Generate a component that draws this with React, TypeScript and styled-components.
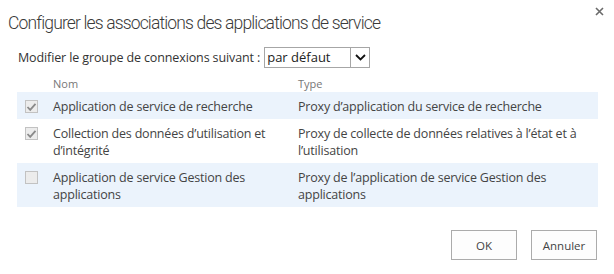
import React from "react"
import styled, { createGlobalStyle } from "styled-components"

const GlobalStyle = createGlobalStyle`
  html, body {
    margin: 0;
    padding: 0;
    background: #ffffff;
  }
  body {
    font-family: "Open Sans", "Noto Sans", sans-serif;
    color: #444444;
  }
`

type Row = { name: string; type: string; checked: boolean }

const rows: Row[] = [
  {
    name: "Application de service de recherche",
    type: "Proxy d’application du service de recherche",
    checked: true,
  },
  {
    name: "Collection des données d’utilisation et d’intégrité",
    type: "Proxy de collecte de données relatives à l’état et à l’utilisation",
    checked: true,
  },
  {
    name: "Application de service Gestion des applications",
    type: "Proxy de l’application de service Gestion des applications",
    checked: false,
  },
]

export default function App() {
  return (
    <>
      <GlobalStyle />
      <Dialog>
        <TitleBar>
          <Title>Configurer les associations des applications de service</Title>
          <CloseButton aria-label="Fermer">
            <svg width="9" height="9" viewBox="0 0 9 9">
              <path d="M1 1 L8 8 M8 1 L1 8" stroke="#6a6a6a" strokeWidth="1.6" />
            </svg>
          </CloseButton>
        </TitleBar>

        <Body>
          <GroupLine>
            <span>Modifier le groupe de connexions suivant :</span>
            <Select>
              <SelectValue>par défaut</SelectValue>
              <SelectArrow>
                <svg width="11" height="7" viewBox="0 0 11 7">
                  <path d="M1 1 L5.5 5.5 L10 1" fill="none" stroke="#111" strokeWidth="1.8" />
                </svg>
              </SelectArrow>
            </Select>
          </GroupLine>

          <Table>
            <HeaderRow>
              <CheckCell />
              <HeadCell>Nom</HeadCell>
              <HeadCell>Type</HeadCell>
            </HeaderRow>
            {rows.map((r, i) => (
              <DataRow key={i} shaded={i % 2 === 0}>
                <CheckCell>
                  <Check>
                    {r.checked && (
                      <svg width="11" height="10" viewBox="0 0 11 10">
                        <path d="M1.5 5 L4.2 7.8 L9.5 1.8" fill="none" stroke="#8a8a8a" strokeWidth="1.8" />
                      </svg>
                    )}
                  </Check>
                </CheckCell>
                <NameCell>{r.name}</NameCell>
                <TypeCell>{r.type}</TypeCell>
              </DataRow>
            ))}
          </Table>
        </Body>

        <Footer>
          <Button>OK</Button>
          <Button>Annuler</Button>
        </Footer>
      </Dialog>
    </>
  )
}

const Dialog = styled.div`
  width: 614px;
  height: 274px;
  box-sizing: border-box;
  display: flex;
  flex-direction: column;
`

const TitleBar = styled.div`
  display: flex;
  align-items: flex-start;
  justify-content: space-between;
  padding: 7px 10px 0 8px;
`

const Title = styled.h1`
  margin: 2px 0 0;
  font-family: Roboto, "Open Sans", sans-serif;
  font-weight: 300;
  font-size: 17.5px;
  line-height: 28px;
  letter-spacing: -0.85px;
  color: #3a3a3a;
`

const CloseButton = styled.div`
  width: 9px;
  height: 9px;
  display: flex;
`

const Body = styled.div`
  padding: 10px 16px 0 17px;
`

const GroupLine = styled.div`
  display: flex;
  align-items: center;
  gap: 4px;
  padding-left: 1px;
  font-size: 12.5px;
  color: #333333;
  letter-spacing: -0.12px;
`

const Select = styled.div`
  width: 106px;
  height: 21px;
  box-sizing: border-box;
  border: 1px solid #a6a6a6;
  display: flex;
  align-items: stretch;
`

const SelectValue = styled.div`
  flex: 1;
  padding-left: 2px;
  font-size: 13px;
  line-height: 19px;
  color: #222222;
  letter-spacing: 0;
`

const SelectArrow = styled.div`
  width: 18px;
  border-left: 1px solid #a6a6a6;
  display: flex;
  align-items: center;
  justify-content: center;
`

const Table = styled.div`
  margin-top: 6px;
  width: 581px;
  display: flex;
  flex-direction: column;
`

const HeaderRow = styled.div`
  display: grid;
  grid-template-columns: 36px 245px 1fr;
  height: 18px;
  align-items: center;
`

const DataRow = styled.div<{ shaded: boolean }>`
  display: grid;
  grid-template-columns: 36px 245px 1fr;
  padding: 6px 0 4px;
  background: ${(p) => (p.shaded ? "#ebf3fc" : "transparent")};
  font-size: 12.5px;
  line-height: 17px;
  color: #444444;
  letter-spacing: -0.2px;
`

const CheckCell = styled.div`
  padding-left: 8px;
  padding-top: 2px;
`

const HeadCell = styled.div`
  font-size: 11px;
  color: #777777;
`

const NameCell = styled.div`
  padding-right: 10px;
`

const TypeCell = styled.div`
  padding-right: 10px;
`

const Check = styled.div`
  width: 13px;
  height: 13px;
  box-sizing: border-box;
  border: 1px solid #c2c2c2;
  background: #ececec;
  display: flex;
  align-items: center;
  justify-content: center;
`

const Footer = styled.div`
  margin-top: auto;
  display: flex;
  justify-content: flex-end;
  gap: 14px;
  padding: 0 17px 14px 0;
`

const Button = styled.div`
  width: 66px;
  height: 30px;
  box-sizing: border-box;
  border: 1px solid #ababab;
  background: #fdfdfd;
  display: flex;
  align-items: center;
  justify-content: center;
  font-size: 11.5px;
  color: #444444;
`
